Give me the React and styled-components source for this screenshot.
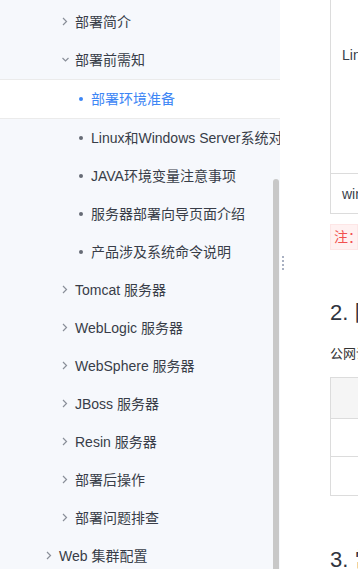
import React from "react";
import styled, { createGlobalStyle } from "styled-components";

const Global = createGlobalStyle`
  html, body { margin: 0; padding: 0; background: #fff; }
  body { font-family: "Liberation Sans", "Noto Sans CJK SC", sans-serif; overflow: hidden; }
`;

const Page = styled.div`
  display: grid;
  grid-template-columns: 280px 1fr;
  height: 569px;
  width: 358px;
  overflow: hidden;
`;

const Sidebar = styled.nav`
  position: relative;
  background: #f6f8fc;
  overflow: hidden;
  padding-top: 3px;
`;

const Thumb = styled.div`
  position: absolute;
  right: 1px;
  top: 179px;
  bottom: 0;
  width: 6px;
  background: #c8c8c8;
  border-radius: 3px 3px 0 0;
`;

const Row = styled.div`
  display: flex;
  align-items: center;
  height: 38px;
  box-sizing: content-box;
  padding-left: ${(p) => p.$indent}px;
  font-size: 14px;
  color: ${(p) => (p.$active ? "#3d86f5" : "#383d48")};
  background: ${(p) => (p.$active ? "#ffffff" : "transparent")};
  border-top: ${(p) => (p.$active ? "1px solid #ebebeb" : "none")};
  border-bottom: ${(p) => (p.$active ? "1px solid #ebebeb" : "none")};
  white-space: nowrap;
  overflow: hidden;
`;

const IconBox = styled.span`
  flex: 0 0 14px;
  width: 14px;
  height: 14px;
  display: flex;
  align-items: center;
`;

const Dot = styled.span`
  width: 4px;
  height: 4px;
  margin-left: 2px;
  border-radius: 50%;
  background: ${(p) => (p.$active ? "#3d86f5" : "#666b75")};
`;

const Label = styled.span`
  line-height: 20px;
`;

const Main = styled.main`
  position: relative;
  background: #fff;
  padding-left: 50px;
  overflow: hidden;
  color: #333;
`;

const Handle = styled.div`
  position: absolute;
  left: 2px;
  top: 256px;
  display: flex;
  flex-direction: column;
  gap: 2px;
`;

const HandleDot = styled.span`
  width: 2px;
  height: 2px;
  background: #a9b1c2;
`;

const Table = styled.table`
  border-collapse: collapse;
  width: 300px;
  font-size: 14px;
  color: #3a3f4b;
  margin-top: ${(p) => p.$mt || 0}px;
`;

const Cell = styled.td`
  border: 1px solid #dcdcdc;
  height: ${(p) => p.$h}px;
  padding: ${(p) => p.$pt || 0}px 0 0 11px;
  vertical-align: ${(p) => (p.$pt ? "top" : "middle")};
  box-sizing: border-box;
  background: ${(p) => (p.$head ? "#f5f5f5" : "#fff")};
  line-height: 20px;
  white-space: nowrap;
`;

const Note = styled.div`
  margin-top: 10px;
  height: 26px;
  box-sizing: border-box;
  background: #fff1f1;
  border: 1px solid #fde6e6;
  color: #f2504f;
  font-size: 14px;
  line-height: 24px;
  padding-left: 3px;
  white-space: nowrap;
`;

const H2 = styled.h2`
  margin: ${(p) => p.$mt}px 0 0;
  font-size: 22px;
  font-weight: normal;
  line-height: 30px;
  color: #2f3440;
  white-space: nowrap;
`;

const Para = styled.p`
  margin: 16px 0 0;
  font-size: 13px;
  line-height: 20px;
  color: #333;
  white-space: nowrap;
`;

const Chevron = ({ down }) => (
  <svg width="14" height="14" viewBox="0 0 14 14">
    {down ? (
      <polyline points="1.5,5 4.5,8 7.5,5" fill="none" stroke="#8a8f99" strokeWidth="1.2" />
    ) : (
      <polyline points="2,3 5.5,6.5 2,10" fill="none" stroke="#8a8f99" strokeWidth="1.2" />
    )}
  </svg>
);

const items = [
  { level: 2, text: "部署简介" },
  { level: 2, text: "部署前需知", open: true },
  { level: 3, text: "部署环境准备", active: true },
  { level: 3, text: "Linux和Windows Server系统对比说明" },
  { level: 3, text: "JAVA环境变量注意事项" },
  { level: 3, text: "服务器部署向导页面介绍" },
  { level: 3, text: "产品涉及系统命令说明" },
  { level: 2, text: "Tomcat 服务器" },
  { level: 2, text: "WebLogic 服务器" },
  { level: 2, text: "WebSphere 服务器" },
  { level: 2, text: "JBoss 服务器" },
  { level: 2, text: "Resin 服务器" },
  { level: 2, text: "部署后操作" },
  { level: 2, text: "部署问题排查" },
  { level: 1, text: "Web 集群配置" },
];

const indent = { 1: 45, 2: 61, 3: 77 };

export default function App() {
  return (
    <>
      <Global />
      <Page>
        <Sidebar>
          {items.map((it) => (
            <Row key={it.text} $indent={indent[it.level]} $active={it.active}>
              <IconBox>
                {it.level === 3 ? <Dot $active={it.active} /> : <Chevron down={it.open} />}
              </IconBox>
              <Label>{it.text}</Label>
            </Row>
          ))}
          <Thumb />
        </Sidebar>
        <Main>
          <Handle>
            <HandleDot />
            <HandleDot />
            <HandleDot />
            <HandleDot />
          </Handle>
          <Table $mt={-1}>
            <tbody>
              <tr>
                <Cell $h={174} $pt={45}>Linux</Cell>
              </tr>
              <tr>
                <Cell $h={40}>windows</Cell>
              </tr>
            </tbody>
          </Table>
          <Note>注：</Note>
          <H2 $mt={48}>2. 网络要求</H2>
          <Para>公网访问说明</Para>
          <Table $mt={13}>
            <tbody>
              <tr>
                <Cell $h={41} $head>&nbsp;</Cell>
              </tr>
              <tr>
                <Cell $h={38}>&nbsp;</Cell>
              </tr>
              <tr>
                <Cell $h={39}>&nbsp;</Cell>
              </tr>
            </tbody>
          </Table>
          <H2 $mt={49}>3. 常见问题</H2>
        </Main>
      </Page>
    </>
  );
}
